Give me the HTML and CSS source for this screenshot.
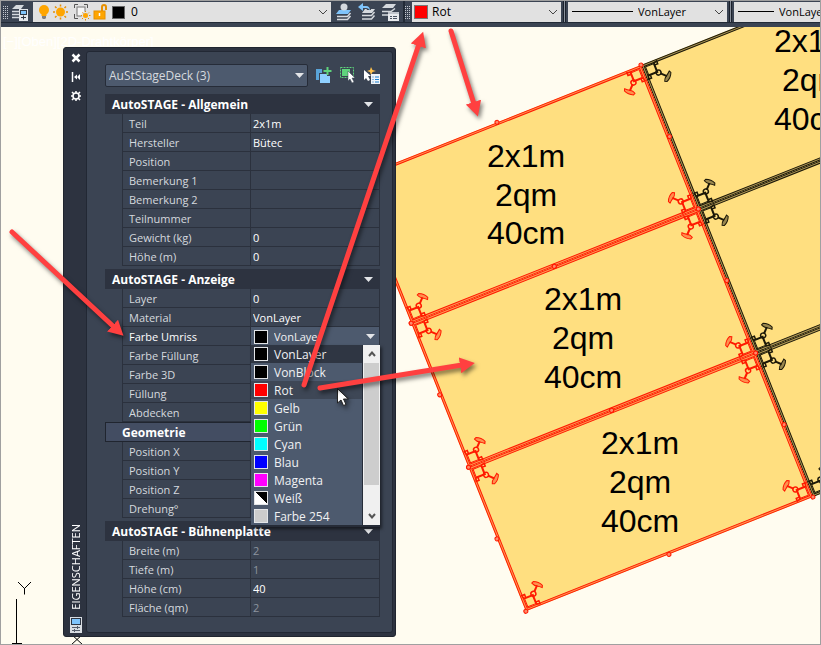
FILE: index.html
```
<!DOCTYPE html>
<html lang="de">
<head>
  <meta charset="UTF-8" />
  <meta name="viewport" content="width=device-width, initial-scale=1.0" />
  <title>AutoSTAGE</title>
  <link rel="stylesheet" href="styles.css">
</head>
<body>

  <div class="workspace">
    <header class="toolbar">
      <span class="grip"></span>
      <button class="tool-btn" aria-label="Layereigenschaften">
        <svg width="20" height="20" viewBox="0 0 20 20">
          <path d="M6 3h8l-3 4H2z" fill="#d5d9de" />
          <path d="M2 9.500h8M2 12.500h8M2 15.500h8" stroke="#d5d9de" stroke-width="1.500" />
          <rect x="9" y="7" width="9" height="12" fill="#e3e6ea" />
          <rect x="10.500" y="8.500" width="6" height="4" fill="#7fc4fb" stroke="#2d3542" />
          <path d="M11 15.500h5M13.500 13.500v4" stroke="#2d3542" />
        </svg>
      </button>
      <div class="combo combo-layer">
        <svg class="layer-icons" width="94" height="20" viewBox="0 0 94 20">
          <circle cx="11" cy="8" r="5" fill="#fea500" />
          <path d="M8.500 12h5v2h-5z" fill="#fea500" />
          <path d="M9 14h4v2l-1 1h-2l-1-1z" fill="#808080" />
          <circle cx="27.500" cy="10" r="4.500" fill="#fea500" />
          <path d="M27.500 2.500v2M27.500 15.500v2M20 10h2M33 10h2M22 4.500l1.500 1.500M31.500 14l1.500 1.500M33 4.500L31.500 6M23.500 14L22 15.500" stroke="#e79000" stroke-width="1.500" />
          <rect x="44" y="5" width="8" height="9" fill="#f6f6f6" stroke="#777" />
          <path d="M41.500 6V2.500H45M51 2.500h3.500V6M41.500 12v4.500H45" fill="none" stroke="#555" />
          <circle cx="52.500" cy="13.500" r="4" fill="#e1e1e1" />
          <circle cx="52.500" cy="13.500" r="2.500" fill="#fea500" />
          <path d="M52.500 9v1M52.500 17v1.500M48 13.500h1M56 13.500h1.500M49.500 10.500l1 1M55 16l1 1M56 10.500l-1 1M50 16l-1 1" stroke="#e79000" />
          <path d="M69 9V5q0-2 2-2t2 2v3" fill="none" stroke="#e79000" stroke-width="2" />
          <rect x="61" y="9" width="11" height="8" fill="#fea500" stroke="#e79000" />
          <path d="M66.500 11v3" stroke="#fff" stroke-width="1.500" />
          <rect x="79.500" y="4.500" width="12" height="12" stroke="#666" />
        </svg>
        <select aria-label="Layer"><option>0</option></select>
        <svg class="chevron" width="10" height="6"><path d="M1 1l4 4 4-4" /></svg>
      </div>
      <button class="tool-btn" aria-label="Layer des Objekts aktuell machen">
        <svg width="20" height="20" viewBox="0 0 20 20">
          <path d="M5 8h12l-3 4H2z" fill="#7fc4fb" />
          <circle cx="10" cy="5" r="3.500" fill="#d5d9de" />
          <path d="M3 14.500h10.500l3-3.500M3 17.500h10.500l3-3.500" fill="none" stroke="#d5d9de" stroke-width="1.500" />
        </svg>
      </button>
      <button class="tool-btn" aria-label="Vorheriger Layer">
        <svg width="20" height="20" viewBox="0 0 20 20">
          <path d="M8 7h10l-3 4H5z" fill="#d5d9de" />
          <path d="M5 13.500h9.500l3-3.500M5 17h9.500l3-3.500" fill="none" stroke="#d5d9de" stroke-width="1.500" />
          <path d="M3 5h6q3 0 3 3" fill="none" stroke="#3b4453" stroke-width="4" />
          <path d="M1 5l5-4v3h3q4 0 4 5-1-3-4-3H6v3z" fill="#7fc4fb" />
        </svg>
      </button>
      <button class="tool-btn" aria-label="Layerstatus">
        <svg width="20" height="20" viewBox="0 0 20 20">
          <path d="M6 2h10l-3 4H2z" fill="#d5d9de" />
          <path d="M2 9.500h9l4-3M2 13h7" fill="none" stroke="#d5d9de" stroke-width="1.500" />
          <rect x="8" y="10" width="11" height="9" fill="#e8eaee" />
          <path d="M8 11h11" stroke="#9aa1ac" />
          <path d="M10 14.500h2M13 14.500h4M10 16.500h2M13 16.500h4" stroke="#4a5362" />
        </svg>
      </button>
      <span class="divider"></span>
      <span class="grip"></span>
      <div class="combo combo-color">
        <span class="swatch red"></span>
        <select aria-label="Farbe"><option>Rot</option></select>
        <svg class="chevron" width="10" height="6"><path d="M1 1l4 4 4-4" /></svg>
      </div>
      <span class="divider wide"></span>
      <div class="combo combo-line">
        <span class="line-sample"></span>
        <select aria-label="Linientyp"><option>VonLayer</option></select>
        <svg class="chevron" width="10" height="6"><path d="M1 1l4 4 4-4" /></svg>
      </div>
      <span class="divider wide"></span>
      <div class="combo combo-line">
        <span class="line-sample short"></span>
        <select aria-label="Linienstärke"><option>VonLayer</option></select>
        <svg class="chevron" width="10" height="6"><path d="M1 1l4 4 4-4" /></svg>
      </div>
    </header>

    <svg class="drawing" width="100%" height="100%">
      <defs>
        <!-- leg clamp, drawn for the top left corner of a deck -->
        <g id="leg" fill="none">
          <path d="M3 12.500h9.500V3" stroke-width="2" />
          <path d="M3 3.500h9M3.500 3v9" />
          <path d="M12 3l4-1v3h-3M3 12l-1 4h3v-3" stroke-width="1.500" />
          <circle cx="13.500" cy="13.500" r="2.500" stroke-width="1.500" />
          <path d="M15 15l5 5" stroke-width="2" />
          <path d="M24 16l1 2q-2 5-7 7l-2-1q1-3 3.500-4.500T24 16z" fill="currentColor" fill-opacity="0.400" />
        </g>
        <g id="deck">
          <rect width="309" height="155" fill="#ffdf80" stroke="none" />
          <rect x="1.500" y="1.500" width="306" height="152" fill="none" stroke-width="2" stroke-opacity="0.350" />
          <rect x="0.500" y="0.500" width="308" height="154" fill="none" />
          <rect x="2.500" y="2.500" width="304" height="150" fill="none" />
          <use href="#leg" />
          <use href="#leg" transform="translate(309 0) scale(-1 1)" />
          <use href="#leg" transform="translate(0 155) scale(1 -1)" />
          <use href="#leg" transform="translate(309 155) scale(-1 -1)" />
        </g>
        <g id="snaps" fill="#ff8a6a">
          <circle r="2" />
          <circle cx="154" r="2" />
          <circle cx="309" r="2" />
          <circle cy="77" r="2" />
          <circle cx="309" cy="77" r="2" />
          <circle cy="155" r="2" />
          <circle cx="154" cy="155" r="2" />
          <circle cx="309" cy="155" r="2" />
        </g>
      </defs>

      <g transform="translate(641 65) rotate(-21.700)">
        <g class="outline-black">
          <use href="#deck" />
          <use href="#deck" y="155" />
          <use href="#deck" y="310" />
        </g>
        <g class="outline-red">
          <use href="#deck" x="-309" />
          <use href="#deck" x="-309" y="155" />
          <use href="#deck" x="-309" y="310" />
          <use href="#snaps" x="-309" />
          <use href="#snaps" x="-309" y="155" />
          <use href="#snaps" x="-309" y="310" />
        </g>
      </g>

      <g class="deck-text">
        <text x="526" y="167">2x1m</text>
        <text x="526" y="206">2qm</text>
        <text x="526" y="244">40cm</text>
        <text x="583" y="310">2x1m</text>
        <text x="583" y="349">2qm</text>
        <text x="583" y="388">40cm</text>
        <text x="640" y="454">2x1m</text>
        <text x="640" y="493">2qm</text>
        <text x="640" y="532">40cm</text>
        <text x="813" y="52">2x1m</text>
        <text x="813" y="91">2qm</text>
        <text x="813" y="130">40cm</text>
      </g>

      <text class="view-label" x="3" y="46">[−][Oben][2D-Drahtkörper]</text>
      <path class="ucs" d="M16.500 599v46M18 582l6.500 6.500L31 582M24.500 588v6.500M71 634l12 11M83 634l-12 11M12 643.500h10" />
    </svg>

    <section class="palette">
      <aside class="palette-bar">
        <button aria-label="Schließen"><svg width="12" height="12"><path d="M2.500 2.500l7 7M9.500 2.500l-7 7" stroke-width="2.500" /></svg></button>
        <button aria-label="Automatisch ausblenden"><svg width="12" height="12"><path d="M2.500 1v10" stroke-width="1.500" /><path d="M4 6l3-2.500v5zM10 3v6L7 6z" fill="#fff" stroke="none" /></svg></button>
        <button aria-label="Optionen"><svg width="12" height="12"><circle cx="6" cy="6" r="3" stroke-width="1.500" /><path d="M6 1v2M6 9v2M1 6h2M9 6h2M2 2l2 2M8 8l2 2M10 2L8 4M4 8l-2 2" stroke-width="1.500" /></svg></button>
        <h1>EIGENSCHAFTEN</h1>
        <svg class="palette-icon" width="12" height="16">
          <rect width="12" height="16" fill="#d9dde2" />
          <rect x="1.500" y="1.500" width="9" height="6" fill="#7fc4fb" stroke="#2d3542" />
          <path d="M2 10.500h8M2 13.500h8M7.500 9v3M4.500 12v3" stroke="#555d6a" stroke-width="1" />
        </svg>
      </aside>

      <div class="palette-body">
        <div class="object-bar">
          <div class="object-select">
            <select aria-label="Objekttyp"><option>AuStStageDeck (3)</option></select>
            <svg class="triangle" width="9" height="5"><path d="M0 0h9L4.500 5z" /></svg>
          </div>
          <button aria-label="PICKADD umschalten">
            <svg width="17" height="17">
              <path d="M1 2h6v4H4v7H1z" fill="#59a4d8" />
              <rect x="5" y="7" width="10" height="9" fill="#8fd0ff" />
              <path d="M8 0h9v9h-5V7H8z" fill="#3b4453" />
              <path d="M12.500 0v8M8.500 4h8" stroke="#5fd47c" stroke-width="2" />
            </svg>
          </button>
          <button aria-label="Objekte wählen">
            <svg width="17" height="17">
              <rect x="1.500" y="0.500" width="13" height="10" fill="none" stroke="#5fd47c" stroke-dasharray="2 1" />
              <rect x="3" y="2" width="8" height="7" fill="#5fd47c" />
              <path d="M9 4v10l2-2 2 4 2-1-2-4h3z" fill="#fff" stroke="#3b4453" stroke-width="0.500" />
            </svg>
          </button>
          <button aria-label="Schnellauswahl">
            <svg width="17" height="17">
              <path d="M8 0l1.500 3L13 4 9.500 5 8 8 7 5 4 4l3-1z" fill="#ffc04a" />
              <path d="M1 3v10l2-2 2 3 2-1-2-4h3z" fill="#fff" />
              <rect x="8" y="7" width="9" height="10" fill="#f0f3f6" />
              <path d="M9.500 10h1M12 10h4M9.500 12.500h1M12 12.500h4M9.500 15h1M12 15h4" stroke="#1b7fd0" />
            </svg>
          </button>
        </div>

        <section class="group">
          <h2>AutoSTAGE - Allgemein <svg class="triangle" width="9" height="5"><path d="M0 0h9L4.500 5z" /></svg></h2>
          <div class="row"><label for="teil">Teil</label><input id="teil" value="2x1m" /></div>
          <div class="row"><label for="hersteller">Hersteller</label><input id="hersteller" value="Bütec" /></div>
          <div class="row"><label for="position">Position</label><input id="position" /></div>
          <div class="row"><label for="bemerkung1">Bemerkung 1</label><input id="bemerkung1" /></div>
          <div class="row"><label for="bemerkung2">Bemerkung 2</label><input id="bemerkung2" /></div>
          <div class="row"><label for="teilnummer">Teilnummer</label><input id="teilnummer" /></div>
          <div class="row"><label for="gewicht">Gewicht (kg)</label><input id="gewicht" value="0" /></div>
          <div class="row"><label for="hoehe">Höhe (m)</label><input id="hoehe" value="0" /></div>
        </section>

        <section class="group">
          <h2>AutoSTAGE - Anzeige <svg class="triangle" width="9" height="5"><path d="M0 0h9L4.500 5z" /></svg></h2>
          <div class="row"><label for="layer">Layer</label><input id="layer" value="0" /></div>
          <div class="row"><label for="material">Material</label><input id="material" value="VonLayer" /></div>
          <div class="row active">
            <label for="umriss">Farbe Umriss</label>
            <div class="color-select">
              <span class="swatch black"></span>
              <select id="umriss"><option>VonLayer</option></select>
              <svg class="triangle" width="9" height="5"><path d="M0 0h9L4.500 5z" /></svg>
              <div class="color-popup">
                <ul role="listbox" aria-label="Farbe Umriss">
                  <li role="option" class="selected"><span class="swatch black"></span>VonLayer</li>
                  <li role="option"><span class="swatch black"></span>VonBlock</li>
                  <li role="option" class="hover"><span class="swatch red"></span>Rot</li>
                  <li role="option"><span class="swatch yellow"></span>Gelb</li>
                  <li role="option"><span class="swatch green"></span>Grün</li>
                  <li role="option"><span class="swatch cyan"></span>Cyan</li>
                  <li role="option"><span class="swatch blue"></span>Blau</li>
                  <li role="option"><span class="swatch magenta"></span>Magenta</li>
                  <li role="option"><span class="swatch white"></span>Weiß</li>
                  <li role="option"><span class="swatch grey"></span>Farbe 254</li>
                </ul>
                <div class="scrollbar">
                  <svg width="8" height="6"><path d="M1 5l3-3.500L7 5" /></svg>
                  <span class="thumb"></span>
                  <svg width="8" height="6"><path d="M1 1l3 3.500L7 1" /></svg>
                </div>
              </div>
            </div>
          </div>
          <div class="row"><label for="fuellfarbe">Farbe Füllung</label><input id="fuellfarbe" /></div>
          <div class="row"><label for="farbe3d">Farbe 3D</label><input id="farbe3d" /></div>
          <div class="row"><label for="fuellung">Füllung</label><input id="fuellung" /></div>
          <div class="row"><label for="abdecken">Abdecken</label><input id="abdecken" /></div>
          <h2 class="sub">Geometrie</h2>
          <div class="row"><label for="posx">Position X</label><input id="posx" /></div>
          <div class="row"><label for="posy">Position Y</label><input id="posy" /></div>
          <div class="row"><label for="posz">Position Z</label><input id="posz" /></div>
          <div class="row"><label for="drehung">Drehung°</label><input id="drehung" /></div>
        </section>

        <section class="group">
          <h2>AutoSTAGE - Bühnenplatte <svg class="triangle" width="9" height="5"><path d="M0 0h9L4.500 5z" /></svg></h2>
          <div class="row"><label for="breite">Breite (m)</label><input id="breite" value="2" disabled /></div>
          <div class="row"><label for="tiefe">Tiefe (m)</label><input id="tiefe" value="1" disabled /></div>
          <div class="row"><label for="hoehecm">Höhe (cm)</label><input id="hoehecm" value="40" /></div>
          <div class="row"><label for="flaeche">Fläche (qm)</label><input id="flaeche" value="2" disabled /></div>
        </section>
      </div>
    </section>

    <svg class="arrows" width="100%" height="100%">
      <defs>
        <marker id="head" markerUnits="userSpaceOnUse" markerWidth="16" markerHeight="16" refX="2" refY="8" orient="auto">
          <path d="M0 0l15 8-15 8z" fill="#ff4040" />
        </marker>
      </defs>
      <path class="cursor" d="M337.500 389v14l3.500-3 2.500 5.500 2.500-1-2.500-5.500h4.500z" />
      <path d="M12 232L114 327" />
      <path d="M304 385L419 44" />
      <path d="M451 31L474 104" />
      <path d="M320 388L462 365" />
    </svg>
  </div>

</body>
</html>
```
FILE: styles.css
```
* {
  box-sizing: border-box;
}

body {
  font-family: "Open Sans", "Noto Sans", sans-serif;
  font-size: 12px;
  margin: 0;
  background: #fffcf0;
}

button {
  background: none;
  border: none;
  padding: 0;
  display: flex;
  cursor: pointer;
}

select,
input {
  font: inherit;
  color: inherit;
  background: none;
  border: none;
  padding: 0;
  margin: 0;
  min-width: 0;
  appearance: none;
}

.workspace {
  position: relative;
  height: 100vh;
  overflow: hidden;
}

.workspace::after {
  content: "";
  position: absolute;
  inset: 0;
  z-index: 3;
  border: 1px solid #a0a0a0;
  pointer-events: none;
}

/* toolbar */

.toolbar {
  position: relative;
  z-index: 1;
  display: flex;
  align-items: center;
  height: 27px;
  padding: 1px 0 5px 3px;
  background: linear-gradient(#3b4453 22px, #222a36 22px, #222a36 23px, #3b4453 23px);
  overflow: hidden;
}

.toolbar > * {
  flex: none;
}

.grip {
  width: 5px;
  height: 14px;
  margin-right: 2px;
  background:
    repeating-linear-gradient(#3b4453 0 1px, transparent 1px 2px),
    repeating-linear-gradient(90deg, #c3c8cf 0 1px, #3b4453 1px 2px);
}

.tool-btn {
  margin-right: 3px;
}

.combo {
  display: flex;
  align-items: center;
  height: 20px;
  padding-right: 3px;
  background: #e1e1e1;
  color: #000;
}

.combo select {
  flex: 1;
}

.combo-layer {
  width: 298px;
  margin-right: 3px;
}

.layer-icons {
  margin-right: 4px;
}

.chevron path {
  fill: none;
  stroke: #444;
}

.combo-color {
  width: 149px;
  padding-left: 2px;
}

.combo-color .swatch {
  margin-right: 4px;
}

.combo-line {
  width: 159px;
  padding-left: 4px;
  font-size: 11px;
}

.line-sample {
  width: 61px;
  height: 1px;
  margin-right: 5px;
  background: #000;
}

.line-sample.short {
  width: 36px;
}

.divider {
  width: 2px;
  height: 21px;
  background: #222a36;
}

.divider.wide {
  width: 3px;
  margin: 0 2px;
  border: solid #1b222d;
  border-width: 0 1px;
  background: #8a919c;
}

/* swatches */

.swatch {
  flex: none;
  width: 14px;
  height: 14px;
  border: 1px solid #e3e5e8;
}

.combo .swatch {
  border-color: #777;
}

.black { background: #000; }
.red { background: #f00; }
.yellow { background: #ff0; }
.green { background: #0f0; }
.cyan { background: #0ff; }
.blue { background: #00f; }
.magenta { background: #f0f; }
.white { background: linear-gradient(45deg, #fff 50%, #000 50%); }
.grey { background: #ccc; }

/* drawing */

.drawing,
.arrows {
  position: absolute;
  inset: 0;
}

.outline-black {
  color: #000;
  stroke: #1c1808;
}

.outline-red {
  color: #ff1a00;
  stroke: #ff1a00;
}

.deck-text {
  font-family: "Liberation Sans", Arial, sans-serif;
  font-size: 32px;
  text-anchor: middle;
}

.view-label {
  font-family: "Liberation Sans", Arial, sans-serif;
  font-size: 13px;
  fill: #fff;
}

.ucs {
  fill: none;
  stroke: #000;
}

.arrows {
  z-index: 2;
  pointer-events: none;
}

.arrows > path {
  fill: none;
  stroke: #ff4040;
  stroke-width: 5;
  stroke-linecap: round;
  marker-end: url(#head);
  filter: drop-shadow(2px 3px 2px rgba(0, 0, 0, 0.5));
}

.arrows > .cursor {
  fill: #fff;
  stroke: #222;
  stroke-width: 1;
  marker-end: none;
}

/* properties palette */

.palette {
  position: absolute;
  left: 63px;
  top: 47px;
  width: 333px;
  display: flex;
  padding: 3px 2px 3px 1px;
  background: #2d3340;
  border: 1px solid #20252f;
  border-radius: 3px;
  color: #d5d9de;
}

.palette-bar {
  width: 21px;
  display: flex;
  flex-direction: column;
  align-items: center;
  gap: 7px;
  padding-top: 1px;
}

.palette-bar button svg {
  fill: none;
  stroke: #fff;
}

.palette-bar h1 {
  margin: auto 0 0;
  font-size: 11px;
  font-weight: normal;
  line-height: 16px;
  color: #fff;
  writing-mode: vertical-rl;
  transform: rotate(180deg);
}

.palette-icon {
  flex: none;
}

.palette-body {
  flex: 1;
  padding: 12px 12px 15px 18px;
  background: #3b4453;
  border: 1px solid #222834;
  border-radius: 3px;
}

.object-bar {
  display: flex;
  align-items: center;
  gap: 7px;
  margin-bottom: 7px;
}

.object-select {
  flex: 1;
  display: flex;
  align-items: center;
  height: 23px;
  padding: 0 3px;
  background: #4d5a6e;
  border: 1px solid #262c38;
  border-radius: 2px;
}

.object-select select,
.color-select select {
  flex: 1;
}

.triangle {
  fill: #e3e5e8;
}

.group {
  margin-bottom: 3px;
}

.group:last-child {
  margin-bottom: 0;
}

.group h2 {
  display: flex;
  align-items: center;
  justify-content: space-between;
  height: 20px;
  margin: 0;
  padding: 0 7px;
  font-size: 12px;
  background: #2d3340;
  color: #fff;
}

.group h2.sub {
  padding-left: 16px;
  background: #434d62;
  border: 1px solid #20252f;
}

.row {
  display: grid;
  grid-template-columns: 128px 1fr;
  height: 19px;
  margin-left: 17px;
  border: solid #2b313d;
  border-width: 0 1px 1px;
  font-size: 11px;
  line-height: 19px;
}

.row label {
  padding-left: 6px;
  border-right: 1px solid #2b313d;
}

.row input {
  padding-left: 2px;
  color: #fff;
}

.row input:disabled {
  color: #8d949f;
}

.row.active label {
  color: #fff;
}

.color-select {
  position: relative;
  display: flex;
  align-items: center;
  gap: 6px;
  padding: 0 4px 0 3px;
  background: #4d5a6e;
  color: #f0f1f3;
}

.color-popup {
  position: absolute;
  z-index: 1;
  top: 18px;
  left: 0;
  right: -1px;
  display: flex;
  padding-bottom: 2px;
  background: #262c38;
  box-shadow: 2px 2px 3px rgba(0, 0, 0, 0.5);
  font-size: 12px;
}

.color-popup ul {
  flex: 1;
  margin: 0 1px 0 0;
  padding: 0;
  list-style: none;
  background: #4d5a6e;
}

.color-popup li {
  display: flex;
  align-items: center;
  gap: 6px;
  height: 18px;
  padding-left: 3px;
}

.color-popup li.selected {
  background: #2f3643;
}

.color-popup li.hover {
  background: #3e4756;
}

.scrollbar {
  width: 17px;
  display: flex;
  flex-direction: column;
  align-items: center;
  gap: 6px;
  padding: 6px 1px;
  background: #f0f0f0;
}

.scrollbar .thumb {
  width: 100%;
  height: 122px;
  margin-bottom: auto;
  background: #cdcdcd;
}

.scrollbar path {
  fill: none;
  stroke: #555;
  stroke-width: 2;
}
```
